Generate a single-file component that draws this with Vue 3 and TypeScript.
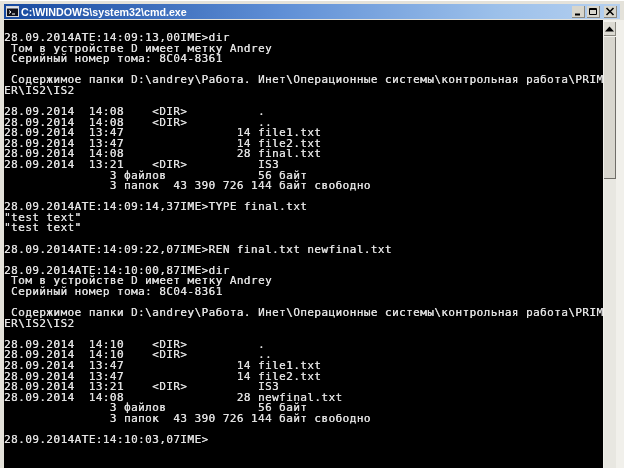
<script setup lang="ts">
const lines: string[] = [
  '28.09.2014ATE:14:09:13,00IME>dir',
  ' Том в устройстве D имеет метку Andrey',
  ' Серийный номер тома: 8C04-8361',
  '',
  ' Содержимое папки D:\\andrey\\Работа. Инет\\Операционные системы\\контрольная работа\\PRIM',
  'ER\\IS2\\IS2',
  '',
  '28.09.2014  14:08    <DIR>          .',
  '28.09.2014  14:08    <DIR>          ..',
  '28.09.2014  13:47                14 file1.txt',
  '28.09.2014  13:47                14 file2.txt',
  '28.09.2014  14:08                28 final.txt',
  '28.09.2014  13:21    <DIR>          IS3',
  '               3 файлов             56 байт',
  '               3 папок  43 390 726 144 байт свободно',
  '',
  '28.09.2014ATE:14:09:14,37IME>TYPE final.txt',
  '"test text"',
  '"test text"',
  '',
  '28.09.2014ATE:14:09:22,07IME>REN final.txt newfinal.txt',
  '',
  '28.09.2014ATE:14:10:00,87IME>dir',
  ' Том в устройстве D имеет метку Andrey',
  ' Серийный номер тома: 8C04-8361',
  '',
  ' Содержимое папки D:\\andrey\\Работа. Инет\\Операционные системы\\контрольная работа\\PRIM',
  'ER\\IS2\\IS2',
  '',
  '28.09.2014  14:10    <DIR>          .',
  '28.09.2014  14:10    <DIR>          ..',
  '28.09.2014  13:47                14 file1.txt',
  '28.09.2014  13:47                14 file2.txt',
  '28.09.2014  13:21    <DIR>          IS3',
  '28.09.2014  14:08                28 newfinal.txt',
  '               3 файлов             56 байт',
  '               3 папок  43 390 726 144 байт свободно',
  '',
  '28.09.2014ATE:14:10:03,07IME>',
]
</script>

<template>
  <div class="win">
    <div class="titlebar">
      <svg class="appicon" width="13" height="11" viewBox="0 0 13 11">
        <rect x="0.5" y="0.5" width="12" height="10" fill="#101018" stroke="#d8d8d8" />
        <rect x="1" y="1" width="11" height="1.5" fill="#dfe4ee" />
        <path d="M3 4.5l2 1.5-2 1.5M6 8h3" stroke="#fff" fill="none" />
      </svg>
      <span class="title">C:\WINDOWS\system32\cmd.exe</span>
      <div class="controls">
        <div class="btn">
          <svg width="12" height="11" viewBox="0 0 12 11"><rect x="3" y="7.5" width="5" height="2" fill="#000" /></svg>
        </div>
        <div class="btn">
          <svg width="12" height="11" viewBox="0 0 12 11"><path d="M2.5 2.5h7v6h-7zM2.5 3.5h7" fill="none" stroke="#000" /></svg>
        </div>
        <div class="btn close">
          <svg width="12" height="11" viewBox="0 0 12 11"><path d="M2.5 2l7 7M9.5 2l-7 7" fill="none" stroke="#000" stroke-width="1.6" /></svg>
        </div>
      </div>
    </div>
    <div class="body">
      <div class="console">
        <div v-for="(line, i) in lines" :key="i" class="line">{{ line }}</div>
      </div>
      <div class="scrollbar">
        <div class="arrow">
          <svg width="9" height="6" viewBox="0 0 9 6"><path d="M4.5 0.5L9 5.5H0z" fill="#000" /></svg>
        </div>
        <div class="thumb"></div>
        <div class="track"></div>
      </div>
    </div>
  </div>
</template>

<style scoped>
.win {
  width: 624px;
  height: 468px;
  box-sizing: border-box;
  padding: 3px 0 0 4px;
  background: #e4e2da;
  display: flex;
  flex-direction: column;
  overflow: hidden;
  border-top: 1px solid #fff;
}
.titlebar {
  height: 15px;
  margin-right: 4px;
  flex: none;
  display: flex;
  align-items: center;
  padding: 0 3px 0 2px;
  background: linear-gradient(90deg, #17499f 0%, #5f8fd6 45%, #9cc0ea 80%, #b5d0f0 100%);
  filter: blur(0.3px);
}
.appicon {
  flex: none;
}
.title {
  margin-left: 2px;
  font-family: "Liberation Sans", sans-serif;
  font-weight: 700;
  font-size: 10.7px;
  color: #fff;
  white-space: nowrap;
}
.controls {
  margin-left: auto;
  display: flex;
}
.btn {
  width: 13px;
  height: 12px;
  margin-left: 2px;
  background: #d8d6cc;
  border-right: 1px solid #8a8880;
  border-bottom: 1px solid #8a8880;
  box-sizing: border-box;
  display: flex;
  align-items: center;
  justify-content: center;
}
.close {
  margin-left: 4px;
}
.body {
  flex: 1;
  min-height: 0;
  display: flex;
  margin-top: 1px;
}
.console {
  width: 599px;
  flex: none;
  box-sizing: border-box;
  padding-top: 13px;
  background: #000;
  color: #e2e2e2;
  font-family: "DejaVu Sans Mono", monospace;
  font-size: 11px;
  letter-spacing: 0.43px;
  text-shadow: 0.3px 0 #c8c8c8;
  filter: blur(0.3px);
}
.line {
  height: 10.58px;
  line-height: 10.58px;
  white-space: pre;
}
.scrollbar {
  flex: 1;
  display: flex;
  flex-direction: column;
  padding: 2px 8px 0 1px;
  background: #f1f0eb;
  border-left: 0;
}
.arrow {
  height: 13px;
  background: #dcdad2;
  border-right: 1px solid #8a8880;
  border-bottom: 1px solid #8a8880;
  display: flex;
  align-items: center;
  justify-content: center;
}
.thumb {
  height: 141px;
  margin-top: 1px;
  background: #d8d6ce;
  border-right: 1px solid #6f6d68;
  border-bottom: 1px solid #6f6d68;
}
.track {
  flex: 1;
  background: #e8e7e1;
}
</style>
